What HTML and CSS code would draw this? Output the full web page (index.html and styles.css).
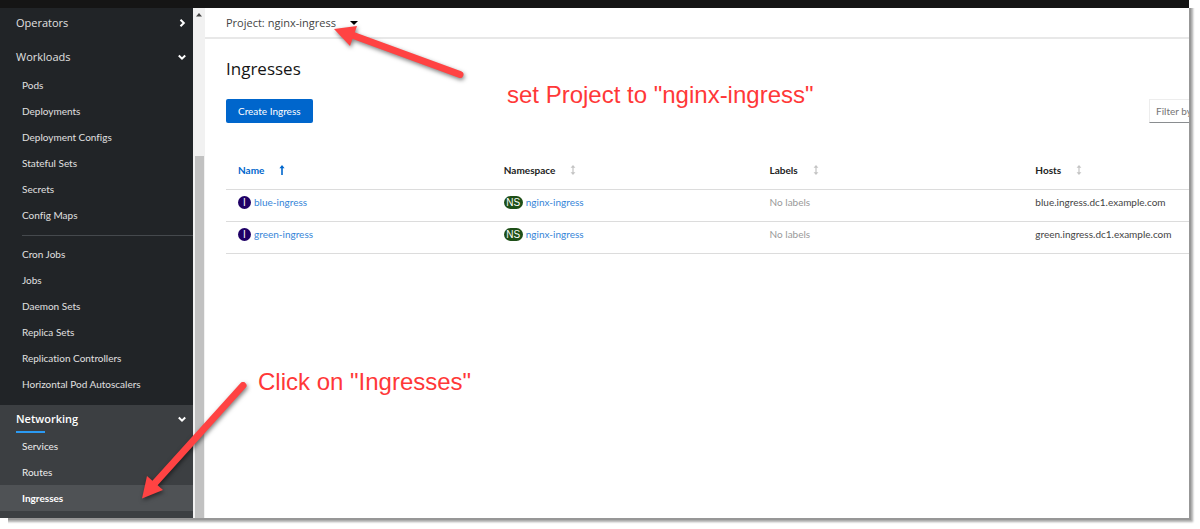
FILE: index.html
```html
<!DOCTYPE html>
<html lang="en">
<head>
<meta charset="utf-8">
<title>Ingresses</title>
<link rel="stylesheet" href="styles.css">
</head>
<body>
<div class="window">
  <header class="masthead"></header>
  <div class="layout">
    <nav class="sidebar" aria-label="Main">
      <button class="section-toggle" type="button">Operators
        <svg class="chevron" viewBox="0 0 10 10"><path d="M3.5 1.8 6.8 5 3.5 8.2"/></svg>
      </button>
      <button class="section-toggle section-toggle-open" type="button">Workloads
        <svg class="chevron" viewBox="0 0 10 10"><path d="M1.8 3.5 5 6.6 8.2 3.5"/></svg>
      </button>
      <ul class="links">
        <li><a href="#">Pods</a></li>
        <li><a href="#">Deployments</a></li>
        <li><a href="#">Deployment Configs</a></li>
        <li><a href="#">Stateful Sets</a></li>
        <li><a href="#">Secrets</a></li>
        <li><a href="#">Config Maps</a></li>
      </ul>
      <hr class="divider">
      <ul class="links">
        <li><a href="#">Cron Jobs</a></li>
        <li><a href="#">Jobs</a></li>
        <li><a href="#">Daemon Sets</a></li>
        <li><a href="#">Replica Sets</a></li>
        <li><a href="#">Replication Controllers</a></li>
        <li><a href="#">Horizontal Pod Autoscalers</a></li>
      </ul>
      <div class="current-section">
        <button class="section-toggle section-toggle-current" type="button">Networking
          <svg class="chevron" viewBox="0 0 10 10"><path d="M1.8 3.5 5 6.6 8.2 3.5"/></svg>
        </button>
        <ul class="links">
          <li><a href="#">Services</a></li>
          <li><a href="#">Routes</a></li>
          <li><a class="current" href="#" aria-current="page">Ingresses</a></li>
        </ul>
      </div>
    </nav>
    <div class="scrollbar">
      <svg class="scroll-up" viewBox="0 0 6 4"><path d="M3 0 6 3.5H0Z"/></svg>
      <div class="scroll-thumb"></div>
    </div>
    <main class="main">
      <div class="project-bar">
        <label for="project">Project:</label>
        <select id="project" class="project-select"><option>nginx-ingress</option></select>
        <svg class="caret" viewBox="0 0 8 4"><path d="M0 0H8L4 4Z"/></svg>
      </div>
      <div class="content">
        <h1 class="title">Ingresses</h1>
        <div class="toolbar">
          <button class="create" type="button">Create Ingress</button>
          <div class="filter"><input type="text" placeholder="Filter by name..." aria-label="Filter by name"></div>
        </div>
        <table class="table">
          <thead>
            <tr>
              <th><button class="sort sort-active" type="button">Name
                <svg class="sort-icon" viewBox="0 0 6 10"><path d="M2.2 10V3.2H.4L3 0l2.6 3.2H3.8V10Z"/></svg></button></th>
              <th><button class="sort" type="button">Namespace
                <svg class="sort-icon" viewBox="0 0 6 10"><path d="M2.4 7.2V2.8H.6L3 0l2.4 2.8H3.6v4.4h1.8L3 10 .6 7.2Z"/></svg></button></th>
              <th><button class="sort" type="button">Labels
                <svg class="sort-icon" viewBox="0 0 6 10"><path d="M2.4 7.2V2.8H.6L3 0l2.4 2.8H3.6v4.4h1.8L3 10 .6 7.2Z"/></svg></button></th>
              <th><button class="sort" type="button">Hosts
                <svg class="sort-icon" viewBox="0 0 6 10"><path d="M2.4 7.2V2.8H.6L3 0l2.4 2.8H3.6v4.4h1.8L3 10 .6 7.2Z"/></svg></button></th>
            </tr>
          </thead>
          <tbody>
            <tr>
              <td><span class="resource"><span class="badge badge-ingress">I</span><a href="#">blue-ingress</a></span></td>
              <td><span class="resource"><span class="badge badge-namespace">NS</span><a href="#">nginx-ingress</a></span></td>
              <td class="muted">No labels</td>
              <td>blue.ingress.dc1.example.com</td>
            </tr>
            <tr>
              <td><span class="resource"><span class="badge badge-ingress">I</span><a href="#">green-ingress</a></span></td>
              <td><span class="resource"><span class="badge badge-namespace">NS</span><a href="#">nginx-ingress</a></span></td>
              <td class="muted">No labels</td>
              <td>green.ingress.dc1.example.com</td>
            </tr>
          </tbody>
        </table>
      </div>
    </main>
  </div>
</div>
<svg class="arrows" width="500" height="520" viewBox="0 0 500 520">
  <g class="arrow"><path class="shaft" d="M352 35 460 74.500"/><path d="M334 29 357 26 350 46Z"/></g>
  <g class="arrow"><path class="shaft" d="M155 483 243 385.500"/><path d="M142 498.500 147 476 163 490Z"/></g>
</svg>
<p class="note note-project">set Project to "nginx-ingress"</p>
<p class="note note-menu">Click on "Ingresses"</p>
</body>
</html>
```

FILE: styles.css
```css
* { box-sizing: border-box; }

body {
  margin: 0;
  padding: 0 11px 11px 0;
  height: 100vh;
  position: relative;
  overflow: hidden;
  background: #fff;
  color: #444;
  font: 10px/16px Lato, "Open Sans", sans-serif;
  font-variant-ligatures: none;
}

button, input, select { font: inherit; color: inherit; }
button { border: 0; padding: 0; background: none; cursor: pointer; }
a { text-decoration: none; }

.window {
  display: flex;
  flex-direction: column;
  height: 100%;
  background: #fff;
  box-shadow: 2px 2px 0 #979797, 3px 3px 2px 1px #aaa;
  clip-path: polygon(0 0, 100% 0, 100% 8px, calc(100% + 9px) 8px, calc(100% + 9px) calc(100% + 9px), 8px calc(100% + 9px), 8px 100%, 0 100%);
}

.masthead { flex: 0 0 8px; background: #151515; }
.layout { flex: 1; display: flex; min-height: 0; }

.sidebar {
  flex: 0 0 193px;
  overflow: hidden;
  background: #212427;
  color: #e0e0e0;
}

.section-toggle, .project-bar, .title { font-family: "Open Sans", sans-serif; }

.section-toggle {
  display: flex;
  align-items: center;
  justify-content: space-between;
  width: 100%;
  height: 30px;
  padding: 0 6px 0 16px;
  font-size: 11px;
}
.section-toggle-open { margin-top: 4px; }
.section-toggle-current {
  height: 28px;
  color: #fff;
  font-weight: 600;
  position: relative;
}
.section-toggle-current::after {
  content: "";
  position: absolute;
  left: 16px;
  bottom: 0;
  width: 29px;
  height: 2px;
  background: #2b9af3;
}

.chevron {
  width: 10px;
  height: 10px;
  fill: none;
  stroke: #fff;
  stroke-width: 2;
}

.links { list-style: none; margin: 0; padding: 0; }
.links a {
  display: block;
  padding: 5px 0 5px 22px;
  color: inherit;
}
.links .current { background: #4f5255; color: #fff; font-weight: 700; }
.divider { margin: 7px 0 5px 22px; border: 0; height: 1px; background: #45494d; }
.current-section { margin-top: 8px; padding-bottom: 8px; background: #3c3f42; color: #eee; }

.scrollbar {
  flex: 0 0 12px;
  display: flex;
  flex-direction: column;
  align-items: center;
  gap: 139px;
  padding-top: 5px;
  background: #f1f1f1;
}
.scroll-up { flex: none; width: 6px; height: 4px; fill: #444; }
.scroll-thumb { flex: 1; width: 9px; background: #c1c1c1; }

.main { flex: 1; min-width: 0; overflow: hidden; }

.project-bar {
  display: flex;
  align-items: center;
  gap: 3px;
  height: 31px;
  padding-left: 21px;
  border-bottom: 2px solid #e8e8e8;
  font-size: 11px;
}
.project-select {
  appearance: none;
  border: 0;
  padding: 0;
  width: 79px;
  background: none;
}
.caret { width: 8px; height: 4px; fill: #000; }

.content { padding: 18px 0 0 21px; }
.title {
  margin: 0;
  color: #151515;
  font-size: 17px;
  font-weight: 400;
  line-height: 24px;
}
.toolbar {
  display: flex;
  justify-content: space-between;
  align-items: center;
  margin-top: 18px;
}
.create {
  height: 24px;
  padding: 0 12px;
  border-radius: 2px;
  background: #06c;
  color: #fff;
}
.filter { flex: 0 0 40px; overflow: hidden; }
.filter input {
  display: block;
  width: 140px;
  height: 24px;
  padding: 0 6px;
  border: 1px solid #ededed;
  border-bottom-color: #8a8d90;
  border-radius: 0;
  background: #fff;
}
.filter input::placeholder { color: #757575; opacity: 1; }

.table {
  width: 100%;
  margin-top: 27px;
  border-collapse: collapse;
  table-layout: fixed;
}
.table th, .table td {
  padding: 4px 0 11px 12px;
  border-bottom: 1px solid #dcdcdc;
  text-align: left;
  white-space: nowrap;
}
.table th { width: 27.6%; padding: 12px 0 11px 12px; }
.table th:last-child { width: auto; }
.sort {
  display: flex;
  align-items: center;
  gap: 15px;
  color: #222;
  font-weight: 700;
}
.sort-icon { width: 6px; height: 10px; fill: #c4c4c4; }
.sort-active { color: #06c; }
.sort-active .sort-icon { fill: #06c; }
.muted { color: #999; }

.resource { display: flex; align-items: center; gap: 3px; }
.resource a { color: #3585d8; }
.badge {
  min-width: 13px;
  border-radius: 7px;
  color: #fff;
  font-family: "Liberation Sans", Arial, sans-serif;
  line-height: 13px;
  text-align: center;
}
.badge-ingress { background: #1f0066; }
.badge-namespace { width: 19px; background: #1e4f18; }

.arrows { position: absolute; left: 0; top: 0; pointer-events: none; }
.arrow { fill: #ff4343; filter: drop-shadow(1px 2px 2px rgba(0, 0, 0, .5)); }
.shaft { stroke: #ff4343; stroke-width: 7; stroke-linecap: round; }

.note {
  position: absolute;
  margin: 0;
  color: #ff3838;
  font: 24px/28px "Liberation Sans", Arial, sans-serif;
  white-space: nowrap;
}
.note-project { left: 507px; top: 81px; }
.note-menu { left: 258px; top: 368px; }
```
